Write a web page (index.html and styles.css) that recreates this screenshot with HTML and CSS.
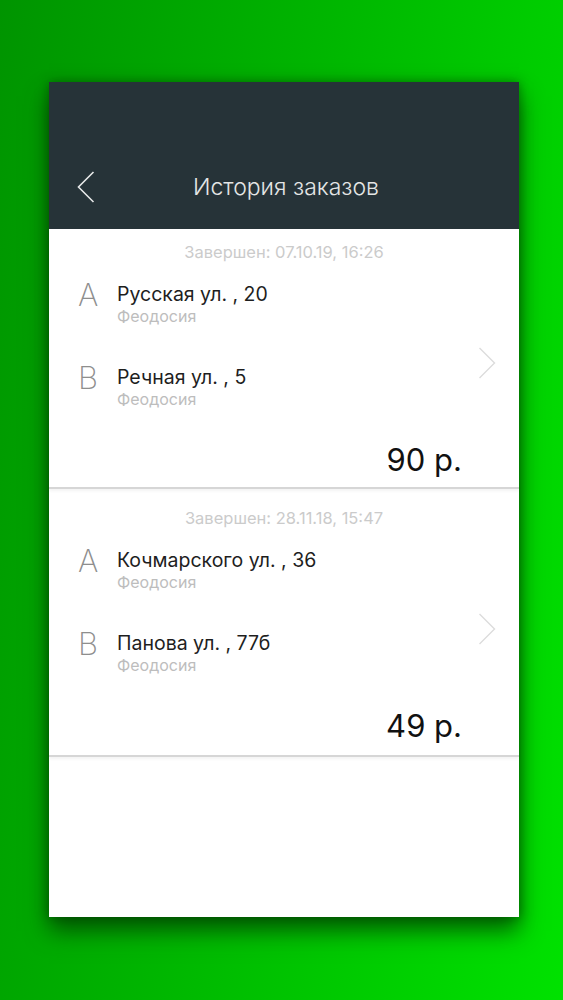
FILE: index.html
```html
<!DOCTYPE html>
<html lang="ru">
<head>
<meta charset="utf-8">
<title>История заказов</title>
<link rel="stylesheet" href="styles.css">
</head>
<body>
<div class="screen">
  <header class="topbar">
    <svg class="back" width="18" height="32" viewBox="0 0 18 32"><path d="M16.5 1 L1.5 16 L16.5 31" fill="none" stroke="#e6e8e8" stroke-width="1.6"/></svg>
    <h1 class="title">История заказов</h1>
  </header>
  <main class="list">
    <section class="order">
      <div class="date">Завершен: 07.10.19, 16:26</div>
      <div class="route">
        <div class="stops">
          <div class="stop">
            <span class="mark">A</span>
            <div class="addr"><div class="street">Русская ул. , 20</div><div class="city">Феодосия</div></div>
          </div>
          <div class="stop stop-b">
            <span class="mark">B</span>
            <div class="addr"><div class="street">Речная ул. , 5</div><div class="city">Феодосия</div></div>
          </div>
        </div>
        <svg class="more" width="18" height="32" viewBox="0 0 18 32"><path d="M1.5 1 L16.5 16 L1.5 31" fill="none" stroke="#dcdcdc" stroke-width="1.4"/></svg>
      </div>
      <div class="price">90 р.</div>
    </section>
    <section class="order">
      <div class="date">Завершен: 28.11.18, 15:47</div>
      <div class="route">
        <div class="stops">
          <div class="stop">
            <span class="mark">A</span>
            <div class="addr"><div class="street">Кочмарского ул. , 36</div><div class="city">Феодосия</div></div>
          </div>
          <div class="stop stop-b">
            <span class="mark">B</span>
            <div class="addr"><div class="street">Панова ул. , 77б</div><div class="city">Феодосия</div></div>
          </div>
        </div>
        <svg class="more" width="18" height="32" viewBox="0 0 18 32"><path d="M1.5 1 L16.5 16 L1.5 31" fill="none" stroke="#dcdcdc" stroke-width="1.4"/></svg>
      </div>
      <div class="price">49 р.</div>
    </section>
  </main>
</div>
</body>
</html>
```
FILE: styles.css
```css
html, body {
  margin: 0;
  padding: 0;
}
body {
  width: 563px;
  height: 1000px;
  overflow: hidden;
  background: linear-gradient(100deg, #009400 0%, #00b600 45%, #00e200 100%);
  font-family: Inter, "Liberation Sans", sans-serif;
  padding-top: 82px;
  box-sizing: border-box;
}
.screen {
  margin-left: 49px;
  width: 470px;
  height: 835px;
  background: #ffffff;
  box-shadow: 0 14px 22px rgba(0, 60, 0, 0.75), 0 0 10px rgba(0, 50, 0, 0.5);
  display: flex;
  flex-direction: column;
}
.topbar {
  height: 147px;
  background: #263338;
  display: flex;
  align-items: flex-start;
  padding: 89px 0 0 28px;
  box-sizing: border-box;
  position: relative;
}
.back {
  display: block;
}
.title {
  margin: 0;
  position: absolute;
  left: 0;
  right: 0;
  top: 90px;
  text-align: center;
  font-weight: 300;
  font-size: 23px;
  line-height: 30px;
  color: #e4e6e6;
  padding-left: 4px;
  pointer-events: none;
}
.list {
  flex: 1;
}
.order {
  padding: 20px 0 11px 0;
  border-bottom: 2px solid #d6d6d6;
  box-shadow: 0 2px 3px rgba(0, 0, 0, 0.05);
}
.order:first-child {
  padding-top: 14px;
  padding-bottom: 9px;
}
.date {
  text-align: center;
  font-size: 16.5px;
  line-height: 18px;
  color: #cbcbcb;
}
.route {
  display: flex;
  margin-top: 22px;
  padding: 0 23px 0 29px;
}
.stops {
  flex: 1;
  display: flex;
  flex-direction: column;
  gap: 41px;
}
.stop {
  display: flex;
}
.mark {
  width: 39px;
  font-size: 31px;
  line-height: 22px;
  font-weight: 200;
  color: #8e8e8e;
  padding-top: 1px;
}
.street {
  font-size: 19.5px;
  line-height: 22px;
  color: #1e1e1e;
}
.city {
  margin-top: 2px;
  font-size: 16px;
  line-height: 18px;
  color: #bdbdbd;
}
.more {
  margin-top: 64px;
  display: block;
}
.price {
  margin-top: 34px;
  text-align: right;
  padding-right: 57px;
  font-size: 31px;
  line-height: 36px;
  color: #111111;
}
```
